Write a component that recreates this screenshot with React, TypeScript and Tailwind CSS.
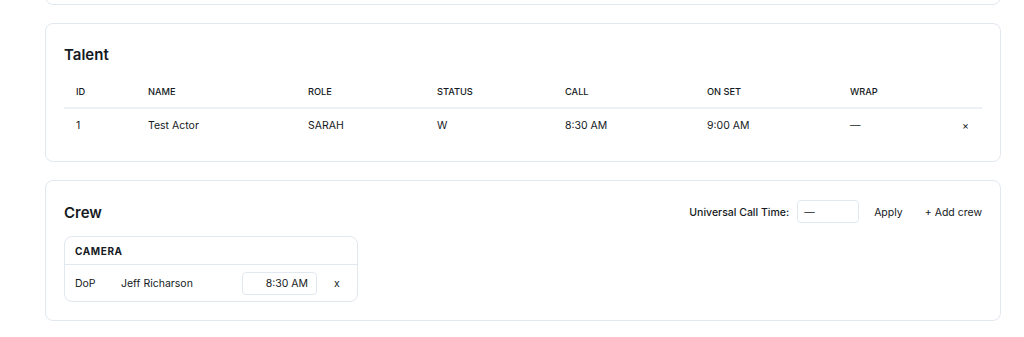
import React from "react";

const cols = "grid grid-cols-[72px_160px_129px_128px_142px_143px_1fr]";

const talent = [
  { id: 1, name: "Test Actor", role: "SARAH", status: "W", call: "8:30 AM", onSet: "9:00 AM", wrap: "—" },
];

const Card = ({ children, className = "" }: { children: React.ReactNode; className?: string }) => (
  <div className={`rounded-lg border border-[#e2e8f0] bg-white ${className}`}>{children}</div>
);

const App = () => {
  return (
    <div className="min-h-[337px] bg-white font-['Inter',sans-serif] text-[#151a23]">
      <div className="mx-[45px] -mt-[39px] flex w-[956px] flex-col gap-[18px]">
        <Card className="h-[44px]">
          <span />
        </Card>

        {/* Talent */}
        <Card className="px-[18px] pt-[18px] pb-[20px]">
          <h2 className="mb-[9px] pt-px text-[15px] leading-6 font-semibold">Talent</h2>
          <div className={`${cols} -mt-px border-b-2 border-[#edf1f5] text-[9.25px] font-medium leading-4`}>
            {["ID", "NAME", "ROLE", "STATUS", "CALL", "ON SET", "WRAP"].map((h) => (
              <div key={h} className="px-3 pt-[9px] pb-[7px]">
                {h}
              </div>
            ))}
          </div>
          {talent.map((t) => (
            <div key={t.id} className={`${cols} text-[10.5px] leading-4`}>
              <div className="px-3 pt-[9px] pb-[7px]">{t.id}</div>
              <div className="px-3 pt-[9px] pb-[7px]">{t.name}</div>
              <div className="px-3 pt-[9px] pb-[7px]">{t.role}</div>
              <div className="px-3 pt-[9px] pb-[7px]">{t.status}</div>
              <div className="px-3 pt-[9px] pb-[7px]">{t.call}</div>
              <div className="px-3 pt-[9px] pb-[7px]">{t.onSet}</div>
              <div className="flex justify-between pt-[9px] pb-[7px] pl-3 pr-[13px]">
                <span>{t.wrap}</span>
                <button>×</button>
              </div>
            </div>
          ))}
        </Card>

        {/* Crew */}
        <Card className="px-[18px] pt-[18px] pb-[18px]">
          <div className="mb-3 flex h-[25px] items-center justify-between">
            <h2 className="pt-[3px] text-[15px] font-semibold">Crew</h2>
            <div className="flex items-center text-[10.5px]">
              <span className="pt-[2px] font-medium">Universal Call Time:</span>
              <input
                defaultValue="—"
                className="ml-2 h-[23px] w-[62px] rounded border border-[#e2e8f0] px-1.5 pt-px text-[10.5px] outline-none"
              />
              <button className="ml-[15px] pt-[2px]">Apply</button>
              <button className="ml-[22px] pt-[2px]">+ Add crew</button>
            </div>
          </div>

          <div className="w-[294px] rounded-lg border border-[#e2e8f0]">
            <div className="flex h-[28px] items-center border-b border-[#e2e8f0] px-2.5 pt-px text-[10px] font-bold tracking-[0.06em]">
              CAMERA
            </div>
            <div className="flex h-[36px] items-center px-2.5 text-[10.5px]">
              <span className="w-[46px] pt-[2px]">DoP</span>
              <span className="w-[121px] pt-[2px]">Jeff Richarson</span>
              <input
                defaultValue="8:30 AM"
                className="h-[23px] w-[75px] rounded border border-[#e2e8f0] px-2 pt-px text-right text-[10.5px] outline-none"
              />
              <button className="ml-[17px] pt-[2px]">x</button>
            </div>
          </div>
        </Card>
      </div>
    </div>
  );
};

export default App;
